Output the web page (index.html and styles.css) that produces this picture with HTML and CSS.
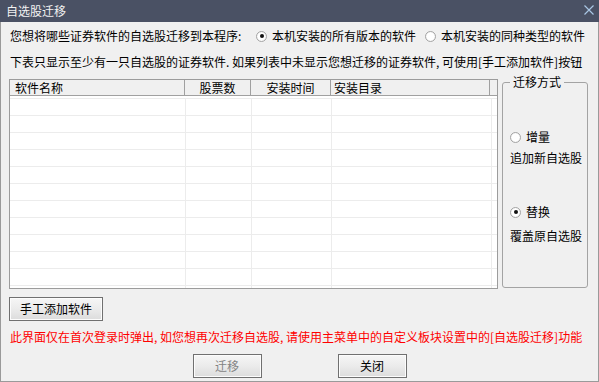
FILE: index.html
```html
<!DOCTYPE html>
<html lang="zh-CN">
<head>
<meta charset="utf-8">
<title>自选股迁移</title>
<link rel="stylesheet" href="styles.css">
</head>
<body>
<div class="window">
  <div class="titlebar">
    <span class="title">自选股迁移</span>
    <svg class="close" width="10" height="10" viewBox="0 0 10 10"><path d="M0.5 0.5 L9.5 9.5 M9.5 0.5 L0.5 9.5" stroke="#a9c6e4" stroke-width="1.2" fill="none"/></svg>
  </div>
  <div class="content">
    <div class="row row-question">
      <span class="question">您想将哪些证券软件的自选股迁移到本程序:</span>
      <label class="opt opt-all"><span class="radio checked"></span>本机安装的所有版本的软件</label>
      <label class="opt"><span class="radio"></span>本机安装的同种类型的软件</label>
    </div>
    <div class="row row-hint">下表只显示至少有一只自选股的证券软件. 如果列表中未显示您想迁移的证券软件, 可使用[手工添加软件]按钮</div>
    <div class="main">
      <div class="table">
        <div class="thead">
          <div class="th th-name">软件名称</div>
          <div class="th th-center">股票数</div>
          <div class="th th-center">安装时间</div>
          <div class="th th-dir">安装目录</div>
          <div class="th th-end"></div>
        </div>
        <div class="tbody">
          <div class="tr"><div class="td"></div><div class="td"></div><div class="td"></div><div class="td"></div><div class="td td-end"></div></div>
          <div class="tr"><div class="td"></div><div class="td"></div><div class="td"></div><div class="td"></div><div class="td td-end"></div></div>
          <div class="tr"><div class="td"></div><div class="td"></div><div class="td"></div><div class="td"></div><div class="td td-end"></div></div>
          <div class="tr"><div class="td"></div><div class="td"></div><div class="td"></div><div class="td"></div><div class="td td-end"></div></div>
          <div class="tr"><div class="td"></div><div class="td"></div><div class="td"></div><div class="td"></div><div class="td td-end"></div></div>
          <div class="tr"><div class="td"></div><div class="td"></div><div class="td"></div><div class="td"></div><div class="td td-end"></div></div>
          <div class="tr"><div class="td"></div><div class="td"></div><div class="td"></div><div class="td"></div><div class="td td-end"></div></div>
          <div class="tr"><div class="td"></div><div class="td"></div><div class="td"></div><div class="td"></div><div class="td td-end"></div></div>
          <div class="tr"><div class="td"></div><div class="td"></div><div class="td"></div><div class="td"></div><div class="td td-end"></div></div>
          <div class="tr"><div class="td"></div><div class="td"></div><div class="td"></div><div class="td"></div><div class="td td-end"></div></div>
          <div class="tr"><div class="td"></div><div class="td"></div><div class="td"></div><div class="td"></div><div class="td td-end"></div></div>
          <div class="tr"><div class="td"></div><div class="td"></div><div class="td"></div><div class="td"></div><div class="td td-end"></div></div>
        </div>
      </div>
      <div class="group">
        <span class="legend">迁移方式</span>
        <label class="opt opt-inc"><span class="radio"></span>增量</label>
        <div class="desc desc-inc">追加新自选股</div>
        <label class="opt opt-rep"><span class="radio checked"></span>替换</label>
        <div class="desc desc-rep">覆盖原自选股</div>
      </div>
    </div>
    <div class="row-add"><button class="btn btn-add">手工添加软件</button></div>
    <div class="row notice">此界面仅在首次登录时弹出, 如您想再次迁移自选股, 请使用主菜单中的自定义板块设置中的[自选股迁移]功能</div>
    <div class="actions">
      <button class="btn btn-action" disabled>迁移</button>
      <button class="btn btn-action">关闭</button>
    </div>
  </div>
</div>
</body>
</html>
```
FILE: styles.css
```css
* { box-sizing: border-box; }
html, body { margin: 0; padding: 0; }
body {
  width: 599px;
  height: 382px;
  overflow: hidden;
  background: #f0f0f0;
  font-family: "Noto Sans CJK SC", "Liberation Sans", sans-serif;
  font-size: 12px;
  color: #000;
}
.window {
  width: 599px;
  height: 382px;
  background: #f0f0f0;
  border-left: 1px solid #9a9a9a;
  border-right: 1px solid #9a9a9a;
  border-bottom: 1px solid #9a9a9a;
  display: flex;
  flex-direction: column;
}
.titlebar {
  height: 22px;
  margin: 0 -1px;
  background: #4a5164;
  display: flex;
  align-items: center;
  justify-content: space-between;
  padding: 0 5px 0 6px;
  flex-shrink: 0;
}
.title {
  color: #f2f2f2;
  font-size: 12px;
  line-height: 22px;
}
.close { display: block; margin-top: -2px; }
.content {
  padding: 6px 0 0 8px;
  display: flex;
  flex-direction: column;
}
.row {
  height: 16px;
  line-height: 16px;
  padding-left: 1px;
  white-space: nowrap;
}
.row-question {
  display: flex;
  align-items: center;
}
.question { width: 246px; flex-shrink: 0; }
.opt {
  display: flex;
  align-items: center;
  height: 16px;
  line-height: 16px;
  white-space: nowrap;
}
.opt-all { width: 169px; flex-shrink: 0; }
.radio {
  width: 11px;
  height: 11px;
  border-radius: 50%;
  border: 1px solid #a5a5a5;
  background: radial-gradient(circle at 50% 50%, #ffffff 0, #ffffff 55%, #e2e2e2 100%);
  margin-right: 5px;
  flex-shrink: 0;
  display: flex;
  align-items: center;
  justify-content: center;
}
.radio.checked::after {
  content: "";
  width: 4px;
  height: 4px;
  border-radius: 50%;
  background: #111;
}
.row-hint { margin-top: 10px; }
.main {
  margin-top: 9px;
  display: flex;
  align-items: flex-start;
}
.table {
  width: 489px;
  height: 210px;
  border: 1px solid #9c9c9c;
  background: #fff;
  display: flex;
  flex-direction: column;
  overflow: hidden;
  flex-shrink: 0;
}
.thead {
  height: 16px;
  display: grid;
  grid-template-columns: 175px 66px 80px 159px 7px;
  background: #f0f0f0;
  border-bottom: 1px solid #a0a0a0;
  flex-shrink: 0;
}
.th {
  height: 15px;
  line-height: 16px;
  border-right: 1px solid #a0a0a0;
  white-space: nowrap;
  overflow: hidden;
}
.th-name { padding-left: 5px; }
.th-center { text-align: center; }
.th-dir { padding-left: 3px; }
.th-end { border-right: none; }
.tbody {
  flex: 1;
  padding-top: 2px;
  overflow: hidden;
}
.tr {
  height: 17px;
  display: grid;
  grid-template-columns: 176px 66px 80px 160px 5px;
  border-top: 1px solid #ececec;
}
.td {
  border-right: 1px solid #ececec;
  margin-top: -1px;
  height: 18px;
}
.td-end { border-right: none; }
.group {
  position: relative;
  width: 86px;
  height: 206px;
  margin-top: 3px;
  margin-left: 4px;
  border: 1px solid #a3a3a3;
  border-radius: 3px;
  padding: 46px 0 0 7px;
  display: flex;
  flex-direction: column;
  flex-shrink: 0;
}
.legend {
  position: absolute;
  left: 7px;
  top: -9px;
  padding: 0 3px;
  background: #f0f0f0;
  line-height: 16px;
  white-space: nowrap;
}
.desc {
  height: 16px;
  line-height: 16px;
  white-space: nowrap;
}
.desc-inc { margin-top: 5px; }
.opt-rep { margin-top: 38px; }
.desc-rep { margin-top: 8px; }
.row-add { margin-top: 8px; display: flex; }
.btn {
  font-family: inherit;
  font-size: 12px;
  color: #000;
  height: 24px;
  padding: 0;
  border: 1px solid #707070;
  border-radius: 0;
  background: linear-gradient(to bottom, #f6f6f6 0%, #ebebeb 50%, #dcdcdc 100%);
  box-shadow: inset 0 0 0 1px #fcfcfc;
  line-height: 20px;
}
.btn-add { width: 94px; }
.notice {
  margin-top: 8px;
  color: #ff0000;
}
.actions {
  margin-top: 9px;
  display: flex;
  justify-content: center;
  gap: 76px;
  padding-right: 8px;
}
.btn-action { width: 69px; }
.btn:disabled { color: #838383; }
```
